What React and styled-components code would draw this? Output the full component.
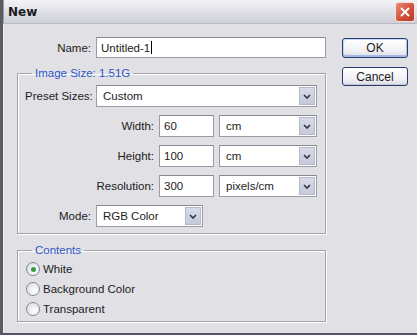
import React from 'react';
import styled, { createGlobalStyle } from 'styled-components';

const GlobalStyle = createGlobalStyle`
  html, body {
    margin: 0;
    padding: 0;
    background: #e1e0e5;
  }
  body {
    font-family: 'Liberation Sans', Arial, sans-serif;
    font-size: 11.5px;
    color: #1c1c1c;
  }
`;

const Window = styled.div`
  width: 417px;
  height: 335px;
  box-sizing: border-box;
  display: flex;
  flex-direction: column;
  background: #e1e0e5;
  border-left: 3px solid #5b5b62;
  border-bottom: 2px solid #53536b;
  overflow: hidden;
`;

const TitleBar = styled.div`
  height: 23px;
  flex: none;
  display: flex;
  align-items: center;
  justify-content: space-between;
  padding: 0 2px 0 5px;
  background: linear-gradient(#f3f3f7, #e2e2e9 45%, #cfcfda);
  border-bottom: 1px solid #b9b9c6;
  box-shadow: inset 1px 0 0 #9c9ca4;
`;

const Title = styled.span`
  font-family: 'DejaVu Sans', Verdana, sans-serif;
  font-weight: bold;
  font-size: 12px;
  color: #1a1a1a;
`;

const CloseButton = styled.div`
  width: 18px;
  height: 18px;
  margin-top: 1px;
  border-radius: 3px;
  border: 1px solid #f4e0dc;
  background: linear-gradient(135deg, #e98a74, #d2503a 55%, #b83a26);
  display: flex;
  align-items: center;
  justify-content: center;
`;

const Body = styled.div`
  flex: 1;
  display: flex;
  padding: 13px 0 0 13px;
  border-left: 1px solid #f0f0f4;
`;

const Main = styled.div`
  width: 309px;
  display: flex;
  flex-direction: column;
`;

const Side = styled.div`
  display: flex;
  flex-direction: column;
  gap: 9px;
  margin-left: 16px;
  padding-top: 1px;
`;

const Row = styled.div`
  display: flex;
  align-items: center;
  gap: 5px;
  height: ${(p) => p.$h || 22}px;
`;

const Label = styled.label`
  width: ${(p) => p.$w}px;
  text-align: right;
  flex: none;
  white-space: nowrap;
`;

const TextBox = styled.div`
  width: ${(p) => p.$w}px;
  height: 100%;
  box-sizing: border-box;
  border: 1px solid #9b9ba6;
  border-top-color: #8a8a94;
  background: #fff;
  display: flex;
  align-items: center;
  padding-left: 4px;
`;

const Caret = styled.span`
  display: inline-block;
  width: 1px;
  height: 13px;
  background: #000;
  margin-left: 1px;
`;

const Select = styled(TextBox)`
  justify-content: space-between;
  padding: 1px;
  padding-left: 6px;
`;

const DropArrow = styled.div`
  width: 16px;
  height: 100%;
  box-sizing: border-box;
  border: 1px solid #b4b8cc;
  background: linear-gradient(#d8dbe8, #c5c9da);
  display: flex;
  align-items: center;
  justify-content: center;
`;

const Group = styled.fieldset`
  margin: ${(p) => p.$mt}px 0 0 0;
  padding: ${(p) => p.$pt}px 0 ${(p) => p.$pb}px 7px;
  border: 1px solid #a3a3a8;
  box-shadow: 1px 1px 0 #fff, inset 1px 1px 0 #fff;
  display: flex;
  flex-direction: column;
  gap: ${(p) => p.$gap}px;
  min-width: 0;
`;

const Legend = styled.legend`
  color: #2f58c8;
  padding: 0 3px;
  margin-left: 7px;
  line-height: 14px;
`;

const Radio = styled.div`
  display: flex;
  align-items: center;
  gap: 3px;
  height: 20px;
  margin-left: 1px;
`;

const RadioCircle = styled.span`
  width: 12px;
  height: 12px;
  border-radius: 50%;
  border: 1px solid #7d8998;
  background: radial-gradient(circle at 65% 65%, #ffffff, #e2e4ea 70%, #cfd2da);
  display: flex;
  align-items: center;
  justify-content: center;
  &::after {
    content: '';
    width: 5px;
    height: 5px;
    border-radius: 50%;
    background: ${(p) => (p.$on ? '#3b9c3f' : 'transparent')};
  }
`;

const Button = styled.button`
  width: 66px;
  height: ${(p) => (p.$primary ? 20 : 19)}px;
  font-family: inherit;
  font-size: 12px;
  color: #1c1c1c;
  border: 1px solid #2a3c6e;
  border-radius: 3px;
  background: linear-gradient(#ffffff, #f2f2f5 60%, #dcdce6);
  box-shadow: ${(p) =>
    p.$primary
      ? 'inset 0 -2px 0 #a6b8e6, inset 1px 1px 0 #c6d4f6, inset -1px 0 0 #b0c2ee'
      : 'inset 0 -1px 0 #c6c8d6'};
  padding: 0;
`;

const Chevron = () => (
  <svg width="8" height="5" viewBox="0 0 8 5">
    <path d="M1 1 L4 4 L7 1" fill="none" stroke="#33333e" strokeWidth="1.6" />
  </svg>
);

const Dropdown = ({ w, children }) => (
  <Select $w={w}>
    <span>{children}</span>
    <DropArrow>
      <Chevron />
    </DropArrow>
  </Select>
);

const radios = [
  { label: 'White', on: true },
  { label: 'Background Color', on: false },
  { label: 'Transparent', on: false },
];

const sizeRows = [
  { label: 'Width:', value: '60', unit: 'cm' },
  { label: 'Height:', value: '100', unit: 'cm' },
  { label: 'Resolution:', value: '300', unit: 'pixels/cm' },
];

export default function App() {
  return (
    <>
      <GlobalStyle />
      <Window>
        <TitleBar>
          <Title>New</Title>
          <CloseButton>
            <svg width="10" height="10" viewBox="0 0 10 10">
              <path d="M1 1 L9 9 M9 1 L1 9" stroke="#fff" strokeWidth="2" />
            </svg>
          </CloseButton>
        </TitleBar>
        <Body>
          <Main>
            <Row $h={21}>
              <Label $w={74}>Name:</Label>
              <TextBox $w={230}>
                Untitled-1
                <Caret />
              </TextBox>
            </Row>

            <Group $mt={8} $pt={5} $pb={6} $gap={8}>
              <Legend>Image Size: 1.51G</Legend>
              <Row>
                <Label $w={66}>Preset Sizes:</Label>
                <Dropdown w={221}>Custom</Dropdown>
              </Row>
              {sizeRows.map((r) => (
                <Row key={r.label}>
                  <Label $w={129}>{r.label}</Label>
                  <TextBox $w={55}>{r.value}</TextBox>
                  <Dropdown w={98}>{r.unit}</Dropdown>
                </Row>
              ))}
              <Row>
                <Label $w={66}>Mode:</Label>
                <Dropdown w={107}>RGB Color</Dropdown>
              </Row>
            </Group>

            <Group $mt={9} $pt={2} $pb={2} $gap={0}>
              <Legend>Contents</Legend>
              {radios.map((r) => (
                <Radio key={r.label}>
                  <RadioCircle $on={r.on} />
                  <span>{r.label}</span>
                </Radio>
              ))}
            </Group>
          </Main>
          <Side>
            <Button $primary>OK</Button>
            <Button>Cancel</Button>
          </Side>
        </Body>
      </Window>
    </>
  );
}
